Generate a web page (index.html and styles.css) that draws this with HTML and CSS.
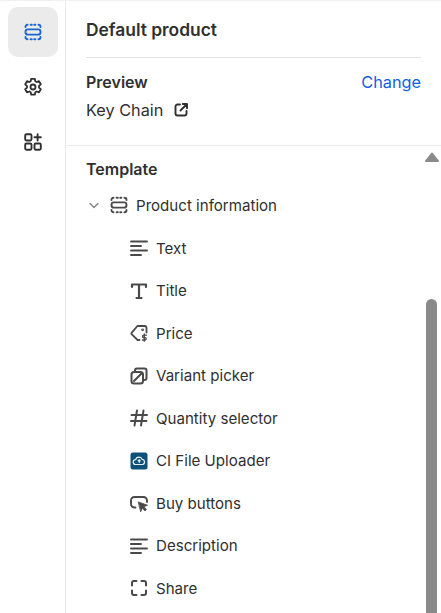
FILE: index.html
```html
<!DOCTYPE html>
<html lang="en">
<head>
<meta charset="UTF-8">
<title>Default product</title>
<link rel="stylesheet" href="styles.css">
</head>
<body>

<div class="app">
  <!-- Left icon rail -->
  <nav class="rail">
    <div class="rail-btn active">
      <svg width="20" height="20" viewBox="0 0 20 20" fill="none" stroke="#1a66d6" stroke-width="1.9" stroke-linecap="round">
        <rect x="2.5" y="7.4" width="15" height="5.2" rx="2.4"/>
        <path d="M2.5 5v-.2a2 2 0 0 1 2-2M7.6 2.8h1.2M11.2 2.8h1.2M15.5 2.8a2 2 0 0 1 2 2V5M2.5 15v.2a2 2 0 0 0 2 2M7.6 17.2h1.2M11.2 17.2h1.2M15.5 17.2a2 2 0 0 0 2-2V15"/>
      </svg>
    </div>
    <div class="rail-btn">
      <svg width="20" height="20" viewBox="0 0 20 20" fill="none" stroke="#303030" stroke-width="1.8" stroke-linejoin="round">
        <circle cx="10" cy="10" r="2.5"/>
        <path d="M8.2 1.8h3.6l.5 2.4 1.4.8 2.3-.8 1.8 3.1-1.8 1.6v1.7l1.8 1.6-1.8 3.1-2.3-.8-1.4.8-.5 2.4H8.2l-.5-2.4-1.4-.8-2.3.8-1.8-3.1 1.8-1.6V9.1L2.2 7.3 4 4.2l2.3.8 1.4-.8z"/>
      </svg>
    </div>
    <div class="rail-btn">
      <svg width="20" height="20" viewBox="0 0 20 20" fill="none" stroke="#303030" stroke-width="1.9" stroke-linecap="round">
        <rect x="2.2" y="2.2" width="6.3" height="6.3" rx="1.2"/>
        <rect x="2.2" y="11.5" width="6.3" height="6.3" rx="1.2"/>
        <rect x="11.5" y="11.5" width="6.3" height="6.3" rx="1.2"/>
        <path d="M14.6 2.2v6.3M11.5 5.3h6.3"/>
      </svg>
    </div>
  </nav>

  <main class="panel">
    <div class="head">
      <h1>Default product</h1>
    </div>

    <div class="preview">
      <div class="preview-top">
        <strong>Preview</strong>
        <a class="change">Change</a>
      </div>
      <div class="preview-name">
        Key Chain
        <svg width="16" height="16" viewBox="0 0 16 16" fill="none" stroke="#303030" stroke-width="1.9" stroke-linecap="round" stroke-linejoin="round">
          <path d="M7 2.5H4.5a2 2 0 0 0-2 2v7a2 2 0 0 0 2 2h7a2 2 0 0 0 2-2V9"/>
          <path d="M9.8 2H14v4.2M14 2L7.5 8.5"/>
        </svg>
      </div>
    </div>

    <div class="template">
      <div class="tree">
        <h2>Template</h2>
        <div class="row parent">
          <svg class="chevron" width="16" height="16" viewBox="0 0 16 16" fill="none" stroke="#8a8a8a" stroke-width="1.6" stroke-linecap="round" stroke-linejoin="round">
            <path d="M4 6.5l4 4 4-4"/>
          </svg>
          <svg width="20" height="20" viewBox="0 0 20 20" fill="none" stroke="#4a4a4a" stroke-width="1.9" stroke-linecap="round">
            <rect x="2.5" y="7.4" width="15" height="5.2" rx="2.4"/>
            <path d="M2.5 5v-.2a2 2 0 0 1 2-2M7.6 2.8h1.2M11.2 2.8h1.2M15.5 2.8a2 2 0 0 1 2 2V5M2.5 15v.2a2 2 0 0 0 2 2M7.6 17.2h1.2M11.2 17.2h1.2M15.5 17.2a2 2 0 0 0 2-2V15"/>
          </svg>
          Product information
        </div>

        <div class="row child">
          <svg width="20" height="20" viewBox="0 0 20 20" fill="none" stroke="#4a4a4a" stroke-width="1.9" stroke-linecap="round">
            <path d="M2 3.5h16M2 8h10M2 12.5h16M2 17h10"/>
          </svg>
          Text
        </div>
        <div class="row child">
          <svg width="20" height="20" viewBox="0 0 20 20" fill="none" stroke="#4a4a4a" stroke-width="2.2" stroke-linecap="round" stroke-linejoin="round">
            <path d="M3 6V3.5h14V6M10 3.5v13.5M7.5 17h5"/>
          </svg>
          Title
        </div>
        <div class="row child">
          <svg width="20" height="20" viewBox="0 0 20 20" fill="none" stroke="#4a4a4a" stroke-width="1.8" stroke-linecap="round" stroke-linejoin="round">
            <path d="M10.5 17H8.6L2.6 11.2a1 1 0 0 1 0-1.4L8.4 3h7.1a2 2 0 0 1 2 2v4.5"/>
            <circle cx="13.6" cy="6.8" r=".5"/>
            <path d="M17.4 12.2h-2.6a1 1 0 0 0 0 2.4h1.2a1 1 0 0 1 0 2.4h-2.6M15.3 11v7.2" stroke-width="1.3"/>
          </svg>
          Price
        </div>
        <div class="row child">
          <svg width="20" height="20" viewBox="0 0 20 20" fill="none" stroke="#4a4a4a" stroke-width="2" stroke-linecap="round" stroke-linejoin="round">
            <rect x="2.5" y="6" width="11.5" height="11.5" rx="2.5"/>
            <path d="M6 4.6a2 2 0 0 1 2-2h7.5a2 2 0 0 1 2 2V12a2 2 0 0 1-2 2M5 15l8-8"/>
          </svg>
          Variant picker
        </div>
        <div class="row child">
          <svg width="20" height="20" viewBox="0 0 20 20" fill="none" stroke="#4a4a4a" stroke-width="2" stroke-linecap="round">
            <path d="M8 2.5L5.5 17.5M14.5 2.5L12 17.5M2.5 7h15.5M2 13h15.5"/>
          </svg>
          Quantity selector
        </div>
        <div class="row child">
          <svg width="20" height="20" viewBox="0 0 20 20">
            <rect x="1.5" y="1.5" width="17" height="17" rx="2.5" fill="#0d5178"/>
            <path d="M6.5 13.5a2.4 2.4 0 0 1 .2-4.8 3.4 3.4 0 0 1 6.5-.3 2.6 2.6 0 0 1 .4 5.1z" fill="none" stroke="#e6f0f5" stroke-width="1.2"/>
            <path d="M10.2 12V9M8.8 10.2l1.4-1.4 1.4 1.4" fill="none" stroke="#e6f0f5" stroke-width="1.1"/>
          </svg>
          CI File Uploader
        </div>
        <div class="row child">
          <svg width="20" height="20" viewBox="0 0 20 20" fill="none" stroke="#4a4a4a" stroke-width="1.9" stroke-linecap="round" stroke-linejoin="round">
            <path d="M6.5 14.5H5.5A3.5 3.5 0 0 1 2 11V7.5A3.5 3.5 0 0 1 5.5 4h9A3.5 3.5 0 0 1 18 7.5V9"/>
            <path d="M9.5 9l9 3.2-3.6 1.5 2.6 2.8-1.6 1.4-2.5-2.8-1.6 3.4z" fill="#4a4a4a" stroke-width=".8"/>
          </svg>
          Buy buttons
        </div>
        <div class="row child">
          <svg width="20" height="20" viewBox="0 0 20 20" fill="none" stroke="#4a4a4a" stroke-width="1.9" stroke-linecap="round">
            <path d="M2 3.5h16M2 8h10M2 12.5h16M2 17h10"/>
          </svg>
          Description
        </div>
        <div class="row child">
          <svg width="20" height="20" viewBox="0 0 20 20" fill="none" stroke="#4a4a4a" stroke-width="2" stroke-linecap="round">
            <path d="M3 7.5V5a2 2 0 0 1 2-2h2.5M12.5 3H15a2 2 0 0 1 2 2v2.5M3 12.5V15a2 2 0 0 0 2 2h2.5M12.5 17H15a2 2 0 0 0 2-2v-2.5"/>
          </svg>
          Share
        </div>
      </div>

      <!-- Scrollbar -->
      <div class="scrollbar">
        <svg class="arrow" width="14" height="10" viewBox="0 0 14 10" fill="#8a8a8a" stroke="#8a8a8a" stroke-width="2" stroke-linejoin="round">
          <path d="M7 1.5L1 9h12z"/>
        </svg>
        <div class="thumb"></div>
      </div>
    </div>
  </main>
</div>

</body>
</html>
```

FILE: styles.css
```css
/* Editor sidebar */
html, body {
  height: 100%;
}
body {
  font-family: Inter, "Noto Sans", sans-serif;
  margin: 0;
  padding: 0;
  background: #fff;
  color: #303030;
  overflow: hidden;
}
.app {
  display: flex;
  height: 613px;
  overflow: hidden;
  border-top: 1px solid #f1f1f1;
  box-sizing: border-box;
}

/* Icon rail */
.rail {
  width: 65px;
  flex: none;
  border-right: 1px solid #ebebeb;
  display: flex;
  flex-direction: column;
  align-items: center;
  padding-top: 6px;
  gap: 5px;
}
.rail-btn {
  width: 50px;
  height: 50px;
  border-radius: 10px;
  display: flex;
  align-items: center;
  justify-content: center;
}
.rail-btn.active {
  background: #ebebeb;
}

/* Main panel */
.panel {
  flex: 1;
  min-width: 0;
  display: flex;
  flex-direction: column;
}
.head {
  margin: 0 20px;
  height: 56px;
  display: flex;
  align-items: center;
  border-bottom: 1px solid #e3e3e3;
}
h1 {
  font-size: 17.4px;
  font-weight: 600;
  margin: 0;
}
.preview {
  padding: 14px 20px 0;
  height: 88px;
  box-sizing: border-box;
  border-bottom: 1px solid #ebebeb;
}
.preview-top {
  display: flex;
  justify-content: space-between;
  align-items: center;
  font-size: 16px;
  line-height: 20px;
}
.preview-top strong {
  font-weight: 600;
}
.change {
  color: #0f62e0;
  font-size: 16.3px;
}
.preview-name {
  display: flex;
  align-items: center;
  gap: 10px;
  font-size: 16.3px;
  line-height: 20px;
  margin-top: 8px;
}

/* Template tree */
.template {
  flex: 1;
  display: flex;
  min-height: 0;
}
.tree {
  flex: 1;
  min-width: 0;
  padding: 13px 0 0 20px;
}
h2 {
  font-size: 16px;
  line-height: 20px;
  font-weight: 600;
  margin: 0 0 14px;
}
.row {
  height: 42.5px;
  display: flex;
  align-items: center;
  font-size: 15.1px;
  white-space: nowrap;
}
.parent {
  gap: 7px;
  height: 24px;
  margin-bottom: 10px;
}
.child {
  padding-left: 43px;
  gap: 7px;
}

/* Scrollbar */
.scrollbar {
  width: 15px;
  flex: none;
  margin-right: 2px;
  display: flex;
  flex-direction: column;
  align-items: center;
}
.arrow {
  flex: none;
  margin-top: 6px;
}
.thumb {
  width: 11px;
  flex: none;
  height: 400px;
  margin-top: 137px;
  background: #8a8a8a;
  border-radius: 6px 6px 0 0;
}
```
